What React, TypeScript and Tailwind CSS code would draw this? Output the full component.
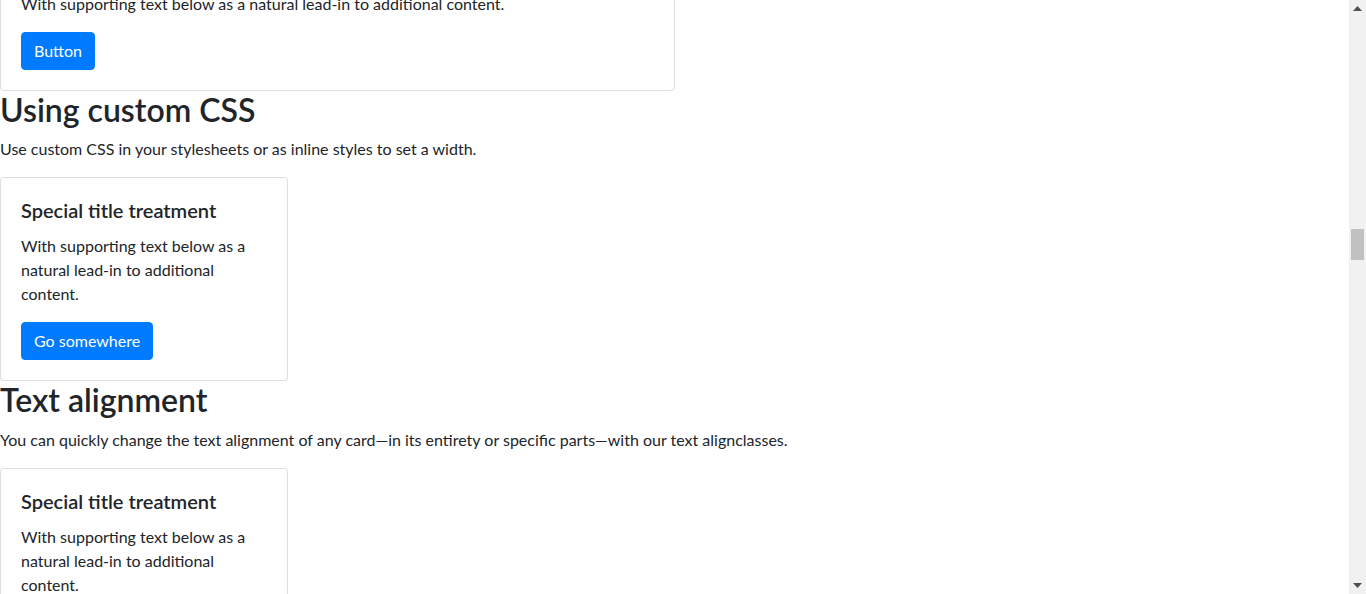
function Card({ children, className }: { children: React.ReactNode; className?: string }) {
  return (
    <div className={"border border-[rgba(0,0,0,0.125)] rounded-[4px] bg-white " + (className ?? "")}>
      <div className="p-5">{children}</div>
    </div>
  );
}

function Btn({ children }: { children: React.ReactNode }) {
  return (
    <button className="bg-[#007bff] text-white text-[16px] leading-6 px-3 py-[6px] rounded-[4px] border border-[#007bff]">
      {children}
    </button>
  );
}

function SpecialCard({ withButton }: { withButton: boolean }) {
  return (
    <Card className="w-[288px]">
      <h5 className="text-[20px] font-semibold leading-[1.2] mb-3">Special title treatment</h5>
      <p className="mb-4">With supporting text below as a natural lead-in to additional content.</p>
      {withButton && <Btn>Go somewhere</Btn>}
    </Card>
  );
}

export default function App() {
  return (
    <div
      className="flex h-[594px] w-full overflow-hidden bg-white text-[16px] leading-6 text-[#212529]"
      style={{ fontFamily: "Lato, 'Open Sans', sans-serif" }}
    >
      <div className="flex-1 overflow-hidden">
        <div className="mt-[-29px]">
          <Card className="w-[675px]">
            <p className="mb-4">With supporting text below as a natural lead-in to additional content.</p>
            <Btn>Button</Btn>
          </Card>
          <h2 className="text-[32px] font-semibold leading-[1.2] mb-2">Using custom CSS</h2>
          <p className="mb-4">Use custom CSS in your stylesheets or as inline styles to set a width.</p>
          <SpecialCard withButton />
          <h2 className="text-[32px] font-semibold leading-[1.2] mb-2">Text alignment</h2>
          <p className="mb-4">
            You can quickly change the text alignment of any card—in its entirety or specific parts—with our text alignclasses.
          </p>
          <SpecialCard withButton />
        </div>
      </div>
      <div className="w-[17px] bg-[#f1f1f1] flex flex-col items-center">
        <div className="h-[17px] flex items-center justify-center">
          <svg width="9" height="5" viewBox="0 0 9 5">
            <polygon points="0,5 9,5 4.5,0" fill="#505050" />
          </svg>
        </div>
        <div className="mt-[212px] w-[13px] h-[31px] bg-[#c1c1c1]" />
        <div className="flex-1" />
        <div className="h-[17px] flex items-center justify-center">
          <svg width="9" height="5" viewBox="0 0 9 5">
            <polygon points="0,0 9,0 4.5,5" fill="#505050" />
          </svg>
        </div>
      </div>
    </div>
  );
}
